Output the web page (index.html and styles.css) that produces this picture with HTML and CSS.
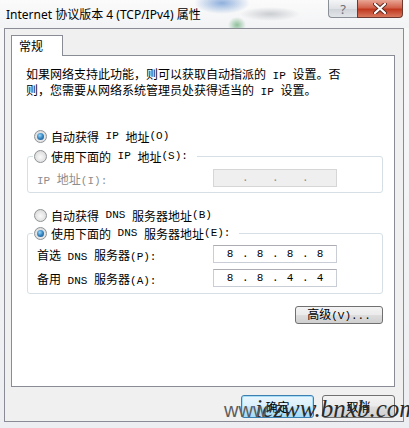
FILE: index.html
```html
<!DOCTYPE html>
<html lang="zh-CN">
<head>
    <meta charset="UTF-8">
    <meta name="viewport" content="width=device-width, initial-scale=1.0">
    <title>Internet 协议版本 4 (TCP/IPv4) 属性</title>
    <link rel="stylesheet" href="styles.css">
</head>
<body>

    <div class="window">
        <div class="titlebar">
            <span class="title">Internet 协议版本 4 (TCP/IPv4) 属性</span>
            <div class="caption">
                <span class="cap-btn help">?</span>
                <span class="cap-btn close">
                    <svg width="14" height="11" viewBox="0 0 14 11">
                        <path d="M2 1 L12 10 M12 1 L2 10" stroke="#5a2a20" stroke-width="4" stroke-linecap="round"/>
                        <path d="M2 1 L12 10 M12 1 L2 10" stroke="#fff" stroke-width="2.2" stroke-linecap="round"/>
                    </svg>
                </span>
            </div>
        </div>

        <div class="frame">
            <div class="tabs">
                <span class="tab">常规</span>
            </div>

            <div class="panel">
                <p class="intro">如果网络支持此功能，则可以获取自动指派的<span class="en"> IP </span>设置。否<br>则，您需要从网络系统管理员处获得适当的<span class="en"> IP </span>设置。</p>

                <div class="option first"><span class="radio checked"></span>自动获得<span class="en"> IP </span>地址<span class="en">(O)</span></div>

                <fieldset class="group">
                    <legend><span class="radio"></span>使用下面的<span class="en"> IP </span>地址<span class="en">(S):</span></legend>
                    <div class="field disabled">
                        <label><span class="en">IP </span>地址<span class="en">(I):</span></label>
                        <div class="ip-box">
                            <span></span><span class="dot">.</span><span></span><span class="dot">.</span><span></span><span class="dot">.</span><span></span>
                        </div>
                    </div>
                </fieldset>

                <div class="option dns-auto"><span class="radio"></span>自动获得<span class="en"> DNS </span>服务器地址<span class="en">(B)</span></div>

                <fieldset class="group dns">
                    <legend><span class="radio checked"></span>使用下面的<span class="en"> DNS </span>服务器地址<span class="en">(E):</span></legend>
                    <div class="field">
                        <label>首选<span class="en"> DNS </span>服务器<span class="en">(P):</span></label>
                        <div class="ip-box">
                            <span>8</span><span class="dot">.</span><span>8</span><span class="dot">.</span><span>8</span><span class="dot">.</span><span>8</span>
                        </div>
                    </div>
                    <div class="field second">
                        <label>备用<span class="en"> DNS </span>服务器<span class="en">(A):</span></label>
                        <div class="ip-box">
                            <span>8</span><span class="dot">.</span><span>8</span><span class="dot">.</span><span>4</span><span class="dot">.</span><span>4</span>
                        </div>
                    </div>
                </fieldset>

                <div class="actions">
                    <button class="btn small">高级<span class="en">(V)...</span></button>
                </div>
            </div>

            <div class="footer">
                <button class="btn default">确定</button>
                <button class="btn">取消</button>
            </div>
        </div>

        <div class="watermark"><span class="wm-gray">www</span><span class="wm-script">iezww.bnxb.com</span></div>
    </div>

</body>
</html>
```

FILE: styles.css
```css
* {
    box-sizing: border-box;
}
body {
    margin: 0;
    background: #eef0f3;
    font-family: "Noto Sans CJK SC", sans-serif;
    font-size: 12px;
    color: #000;
}
.en {
    font-family: "Liberation Mono", monospace;
    font-size: 11px;
}
.window {
    position: relative;
    width: 409px;
    height: 428px;
    overflow: hidden;
    background: linear-gradient(#f8f8f9, #eceef1);
}
.titlebar {
    height: 28px;
    display: flex;
    align-items: flex-start;
    background:
        radial-gradient(ellipse 28px 11px at 222px 3px, rgba(70, 125, 200, 0.6), transparent),
        radial-gradient(ellipse 9px 8px at 237px 25px, rgba(60, 150, 80, 0.55), transparent),
        radial-gradient(ellipse 30px 7px at 270px 14px, rgba(120, 128, 138, 0.35), transparent),
        linear-gradient(#fbfbfb, #f2f3f5);
}
.title {
    font-family: "Noto Sans", "Noto Sans CJK SC", sans-serif;
    font-size: 12px;
    line-height: 16px;
    margin: 7px 0 0 6px;
    white-space: nowrap;
}
.caption {
    display: flex;
    margin-left: auto;
    margin-right: 6px;
}
.cap-btn {
    height: 18px;
    display: flex;
    align-items: center;
    justify-content: center;
    border: 1px solid #8b8f96;
    border-top: none;
}
.help {
    width: 29px;
    border-right: none;
    border-radius: 0 0 0 4px;
    background: linear-gradient(#f4f5f6, #dfe2e6 50%, #cfd3d8 51%, #e2e5e8);
    font-family: "Noto Sans", sans-serif;
    font-size: 13px;
    color: #6d7075;
}
.close {
    width: 46px;
    border-color: #6e3a30;
    border-radius: 0 0 4px 0;
    background: linear-gradient(#e9a695, #d2624b 45%, #c0391f 55%, #d9785e);
}
.frame {
    width: 400px;
    height: 394px;
    margin-left: 4px;
    padding: 6px 8px 0 6px;
    border: 1px solid #898c95;
    background: #f0f0f0;
}
.tabs {
    display: flex;
}
.tab {
    position: relative;
    width: 52px;
    height: 21px;
    margin-bottom: -1px;
    padding-left: 7px;
    border: 1px solid #898c95;
    border-bottom: none;
    background: #fff;
    line-height: 20px;
}
.panel {
    height: 332px;
    padding: 11px 11px 0 14px;
    border: 1px solid #898c95;
    background: #fff;
}
.intro {
    margin: 0;
    line-height: 13px;
    white-space: nowrap;
}
.option {
    display: flex;
    align-items: center;
    height: 16px;
    padding-left: 8px;
    white-space: nowrap;
    white-space: pre;
}
.option.first {
    margin-top: 29px;
}
.option.dns-auto {
    margin-top: 14px;
}
.radio {
    position: relative;
    flex: none;
    width: 13px;
    height: 13px;
    margin-right: 4px;
    border-radius: 50%;
    border: 1px solid #8e9396;
    background: radial-gradient(circle at 50% 55%, #fafafa 0, #e4e4e4 55%, #cfd0d1 100%);
}
.radio.checked::after {
    content: "";
    position: absolute;
    left: 2px;
    top: 2px;
    width: 7px;
    height: 7px;
    border-radius: 50%;
    background: radial-gradient(circle at 40% 35%, #9bd7f7 0, #3b8bc6 45%, #0f4374 100%);
}
.group {
    width: 356px;
    margin: 4px 0 0 1px;
    padding: 0 0 5px 0;
    border: 1px solid #d5dfe5;
    border-radius: 3px;
}
.group.dns {
    margin-top: 2px;
    padding-bottom: 6px;
}
.group legend {
    display: flex;
    align-items: center;
    height: 16px;
    margin-left: 5px;
    padding: 0 9px 0 1px;
    white-space: pre;
}
.field {
    display: flex;
    align-items: center;
    height: 18px;
    margin-top: 5px;
    padding-left: 9px;
}
.group.dns .field {
    margin-top: 4px;
}
.group.dns .field.second {
    margin-top: 6px;
}
.field label {
    width: 176px;
    white-space: pre;
}
.field.disabled label {
    color: #8d8d8d;
}
.ip-box {
    display: grid;
    grid-template-columns: 1fr auto 1fr auto 1fr auto 1fr;
    align-items: center;
    width: 124px;
    height: 18px;
    padding: 0 4px;
    border: 1px solid #c9ced6;
    border-top-color: #abadb3;
    background: #fff;
    text-align: center;
    line-height: 16px;
    font-family: "Liberation Mono", monospace;
    font-size: 11px;
}
.field.disabled .ip-box {
    background: #efefef;
    border-color: #d6d6d6;
    color: #8d8d8d;
}
.dot {
    width: 6px;
}
.actions {
    display: flex;
    justify-content: flex-end;
    width: 356px;
    margin: 12px 0 0 1px;
}
.btn {
    height: 23px;
    padding: 0;
    border: 1px solid #707070;
    border-radius: 3px;
    background: linear-gradient(#f3f3f3 0%, #ebebeb 48%, #dddddd 52%, #cfcfcf 100%);
    font-family: "Noto Sans CJK SC", sans-serif;
    font-size: 12px;
    color: #000;
}
.btn.small {
    width: 88px;
    height: 18px;
    line-height: 14px;
}
.footer {
    display: flex;
    justify-content: flex-end;
    gap: 8px;
    margin-top: 8px;
}
.footer .btn {
    width: 73px;
}
.btn.default {
    border-color: #3c7fb1;
    box-shadow: inset 0 0 0 1px #a7dcf7;
    background: linear-gradient(#eaf6fd 0%, #d9f0fc 48%, #bee6fd 52%, #a7d9f5 100%);
}
.watermark {
    position: absolute;
    left: 224px;
    top: 395px;
    white-space: nowrap;
    line-height: 28px;
}
.wm-gray {
    position: relative;
    font-family: "Liberation Sans", sans-serif;
    font-size: 20px;
    color: #5e5e5e;
}
.wm-script {
    margin-left: -12px;
    font-family: "Liberation Serif", serif;
    font-style: italic;
    font-size: 25px;
    color: #2a2a2a;
}
```
